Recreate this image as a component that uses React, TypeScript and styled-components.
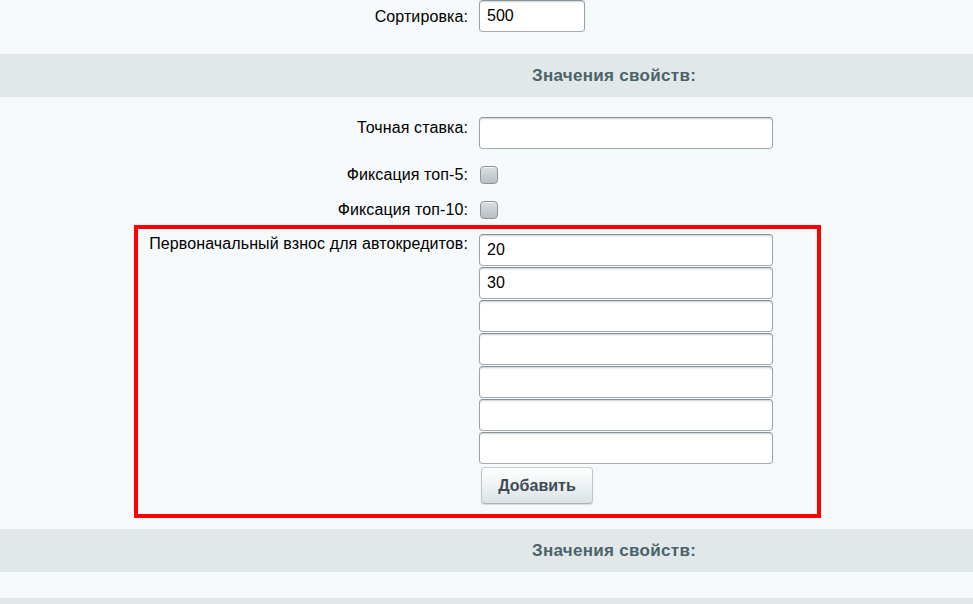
import React from "react";
import styled, { createGlobalStyle } from "styled-components";

const Global = createGlobalStyle`
  html, body { margin: 0; padding: 0; background: #f5f9f9; }
  body { font-family: "Liberation Sans", Arial, sans-serif; font-size: 16px; color: #000; overflow: hidden; }
`;

const Page = styled.div`
  width: 973px;
  height: 604px;
  overflow: hidden;
  background: #f5f9f9;
`;

const Row = styled.div<{ $pt?: number; $pb?: number; $align?: string }>`
  display: grid;
  grid-template-columns: 479px 1fr;
  align-items: ${(p) => p.$align || "start"};
  padding-top: ${(p) => p.$pt || 0}px;
  padding-bottom: ${(p) => p.$pb || 0}px;
`;

const Label = styled.div<{ $pt?: number }>`
  text-align: right;
  padding-right: 11px;
  padding-top: ${(p) => p.$pt || 0}px;
  line-height: 18px;
  white-space: nowrap;
  letter-spacing: 0.1px;
`;

const Field = styled.div`
  display: flex;
  flex-direction: column;
  align-items: flex-start;
`;

const Input = styled.input<{ $w: number }>`
  box-sizing: border-box;
  width: ${(p) => p.$w}px;
  height: 32px;
  margin: 0 0 1px 0;
  padding: 0 7px;
  border: 1px solid;
  border-color: #888f97 #9aa1a8 #a3aab0 #9aa1a8;
  border-radius: 4px;
  background: #fff;
  box-shadow: inset 0 2px 2px -1px rgba(180, 188, 191, 0.7), 0 1px 0 rgba(255, 255, 255, 0.3);
  font-family: "Liberation Sans", Arial, sans-serif;
  font-size: 16px;
  color: #000;
  outline: none;
`;

const Check = styled.span`
  display: block;
  box-sizing: border-box;
  width: 18px;
  height: 18px;
  margin-left: 1px;
  border: 1px solid #8d9498;
  border-radius: 4px;
  background: linear-gradient(#d9dee1, #b9c0c4);
  box-shadow: inset 0 1px 0 rgba(255, 255, 255, 0.6);
`;

const Heading = styled.div<{ $mt: number }>`
  margin-top: ${(p) => p.$mt}px;
  height: 43px;
  background: #e0e8ea;
  display: flex;
  align-items: center;
  padding-left: 532px;
  font-weight: bold;
  font-size: 17px;
  letter-spacing: 0.3px;
  color: #4b6267;
`;

const Highlight = styled.div`
  margin: 6px 0 0 134px;
  width: 687px;
  box-sizing: border-box;
  border: 4px solid #ff0000;
  padding: 5px 0 10px;
  display: grid;
  grid-template-columns: 341px 1fr;
  align-items: start;
`;

const Button = styled.button`
  box-sizing: border-box;
  margin: 2px 0 0 2px;
  width: 112px;
  height: 37px;
  border: 1px solid;
  border-color: #c3cbcf #bcc4c8 #a9b2b7 #bcc4c8;
  border-radius: 4px;
  background: linear-gradient(#ffffff, #dbe3e6);
  box-shadow: 0 1px 1px rgba(0, 0, 0, 0.12), inset 0 1px 0 #fff;
  font-family: "Liberation Sans", Arial, sans-serif;
  font-weight: bold;
  font-size: 16px;
  color: #3f4b53;
  cursor: pointer;
`;

const Spacer = styled.div<{ $h: number; $bg?: string }>`
  height: ${(p) => p.$h}px;
  background: ${(p) => p.$bg || "transparent"};
`;

const values = ["20", "30", "", "", "", "", ""];

export default function App() {
  return (
    <Page>
      <Global />
      <Row $align="center">
        <Label>Сортировка:</Label>
        <Field>
          <Input $w={106} defaultValue="500" />
        </Field>
      </Row>
      <Heading $mt={21}>Значения свойств:</Heading>
      <Row $pt={20}>
        <Label $pt={2}>Точная ставка:</Label>
        <Field>
          <Input $w={294} defaultValue="" />
        </Field>
      </Row>
      <Row $pt={16} $align="center">
        <Label>Фиксация топ-5:</Label>
        <Field>
          <Check />
        </Field>
      </Row>
      <Row $pt={17} $align="center">
        <Label>Фиксация топ-10:</Label>
        <Field>
          <Check />
        </Field>
      </Row>
      <Highlight>
        <Label $pt={1}>Первоначальный взнос для автокредитов:</Label>
        <Field>
          {values.map((v, i) => (
            <Input key={i} $w={294} defaultValue={v} />
          ))}
          <Button>Добавить</Button>
        </Field>
      </Highlight>
      <Heading $mt={11}>Значения свойств:</Heading>
      <Spacer $h={26} />
      <Spacer $h={10} $bg="#e0e8ea" />
    </Page>
  );
}
